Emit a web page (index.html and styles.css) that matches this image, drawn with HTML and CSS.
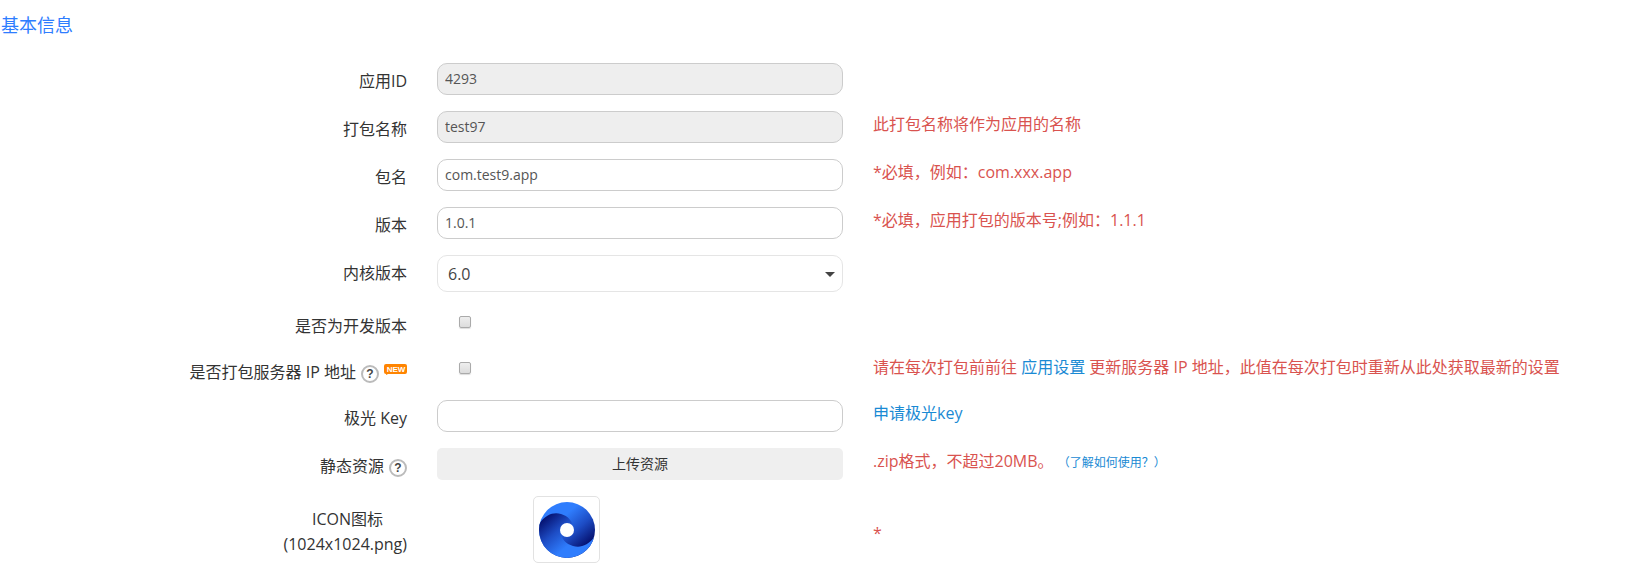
FILE: index.html
```html
<!DOCTYPE html>
<html lang="zh-CN">
<head>
<meta charset="utf-8">
<meta name="viewport" content="width=device-width, initial-scale=1">
<title>基本信息</title>
<link rel="stylesheet" href="styles.css">
</head>
<body>
<main>
  <h1 class="title">基本信息</h1>
  <form class="form">
    <div class="row">
      <label class="label" for="app-id">应用ID</label>
      <input class="input" id="app-id" type="text" value="4293" readonly>
    </div>
    <div class="row">
      <label class="label" for="pack-name">打包名称</label>
      <input class="input" id="pack-name" type="text" value="test97" readonly>
      <p class="hint">此打包名称将作为应用的名称</p>
    </div>
    <div class="row">
      <label class="label" for="package">包名</label>
      <input class="input" id="package" type="text" value="com.test9.app">
      <p class="hint">*必填，例如：com.xxx.app</p>
    </div>
    <div class="row">
      <label class="label" for="version">版本</label>
      <input class="input" id="version" type="text" value="1.0.1">
      <p class="hint">*必填，应用打包的版本号;例如：1.1.1</p>
    </div>
    <div class="row">
      <label class="label" for="core">内核版本</label>
      <div class="select-wrap">
        <select class="select" id="core"><option>6.0</option></select>
        <svg class="caret" viewBox="0 0 10 5" aria-hidden="true"><path d="M0 0h10L5 5z"/></svg>
      </div>
    </div>
    <div class="row">
      <label class="label" for="dev">是否为开发版本</label>
      <div class="check-cell"><input class="check" id="dev" type="checkbox"></div>
    </div>
    <div class="row">
      <div class="label">
        <label for="pack-ip">是否打包服务器 IP 地址</label>
        <span class="help">?</span>
        <svg class="new" viewBox="0 0 23 11" role="img" aria-label="NEW">
          <path d="M2 0h19q2 0 2 2v6q0 2-2 2H4L2 11V10Q0 10 0 8V2q0-2 2-2z"/>
          <text x="12" y="8" text-anchor="middle">NEW</text>
        </svg>
      </div>
      <div class="check-cell"><input class="check" id="pack-ip" type="checkbox"></div>
      <p class="hint">请在每次打包前前往 <a href="#settings">应用设置</a> 更新服务器 IP 地址，此值在每次打包时重新从此处获取最新的设置</p>
    </div>
    <div class="row">
      <label class="label" for="key">极光 Key</label>
      <input class="input" id="key" type="text">
      <p class="hint"><a href="#key-apply">申请极光key</a></p>
    </div>
    <div class="row">
      <div class="label">
        <label for="upload">静态资源</label>
        <span class="help">?</span>
      </div>
      <button class="upload" id="upload" type="button">上传资源</button>
      <p class="hint">.zip格式，不超过20MB。 <a class="small" href="#usage">（了解如何使用？）</a></p>
    </div>
    <div class="row row-icon">
      <label class="label label-icon" for="icon"><span class="label-line">ICON图标</span><span>(1024x1024.png)</span></label>
      <button class="icon-box" id="icon" type="button">
        <svg class="logo" viewBox="0 0 56 56" aria-hidden="true">
          <defs>
            <clipPath id="disc"><circle cx="28" cy="28" r="28"/></clipPath>
            <linearGradient id="left" gradientUnits="userSpaceOnUse" x1="1" y1="19" x2="25" y2="47">
              <stop offset="0" stop-color="#05106e"/><stop offset="0.5" stop-color="#1d4cc4"/><stop offset="1" stop-color="#2f7dfd"/>
            </linearGradient>
            <linearGradient id="right" gradientUnits="userSpaceOnUse" x1="55" y1="37" x2="31" y2="9">
              <stop offset="0" stop-color="#05106e"/><stop offset="0.5" stop-color="#1d4cc4"/><stop offset="1" stop-color="#2f7dfd"/>
            </linearGradient>
          </defs>
          <g clip-path="url(#disc)">
            <path fill="url(#right)" d="M0 0H56V56H0Z"/>
            <path fill="url(#left)" d="M0 22C7 12 15 10 22 12C29 14 34 19 35 28H21C22 37 27 42 34 44C41 46 49 44 56 34V56H0Z"/>
          </g>
          <circle cx="28" cy="28" r="7" fill="#fff"/>
        </svg>
      </button>
      <p class="hint">*</p>
    </div>
  </form>
</main>
</body>
</html>
```

FILE: styles.css
```css
* { box-sizing: border-box; }

body {
  margin: 0;
  background: #fff;
  color: #333;
  font: 16px/22px "Open Sans", "Noto Sans CJK SC", sans-serif;
}

.title {
  margin: 0;
  padding: 12px 1px 25px;
  color: #2e7dff;
  font-size: 18px;
  font-weight: 400;
  line-height: 26px;
}

.form {
  display: grid;
  gap: 16px;
  padding-bottom: 14px;
}

.row {
  display: grid;
  grid-template-columns: 407fr 406fr 776fr;
  column-gap: 30px;
  align-items: start;
  min-height: 30px;
}

.label {
  display: flex;
  justify-content: flex-end;
  height: 30px;
  padding-top: 7px;
  white-space: nowrap;
}

.input,
.select,
.upload,
.icon-box {
  font-family: inherit;
}

.input {
  width: 100%;
  height: 32px;
  padding: 0 7px 2px;
  border: 1px solid #ccc;
  border-radius: 10px;
  background: #fff;
  color: #555;
  font-size: 14px;
}

.input:read-only { background: #eee; }

.select-wrap { position: relative; }

.select {
  display: block;
  width: 100%;
  height: 37px;
  padding: 0 10px;
  appearance: none;
  border: 1px solid #e5e5e5;
  border-radius: 10px;
  background: #fff;
  color: #444;
  font-size: 16px;
}

.caret {
  position: absolute;
  top: 17px;
  right: 8px;
  width: 10px;
  height: 5px;
  fill: #444;
  pointer-events: none;
}

.check-cell {
  display: flex;
  padding: 8px 22px 0;
}

.check {
  width: 12px;
  height: 12px;
  margin: 0;
  appearance: none;
  border: 1px solid #aaa;
  border-radius: 2px;
  background: linear-gradient(#eee, #dcdcdc);
  box-shadow: 0 1px 1px #ddd;
}

.check:checked { background: #777; }

.help {
  width: 18px;
  height: 18px;
  margin: 4px 0 0 5px;
  border: 2px solid #bbb;
  border-radius: 50%;
  color: #444;
  font: bold 12px/14px "Liberation Sans", sans-serif;
  text-align: center;
}

.new {
  width: 23px;
  height: 11px;
  margin: 3px 0 0 5px;
  fill: #ff8400;
}

.new text {
  fill: #fff;
  font: bold 8px "Liberation Sans", sans-serif;
}

.hint {
  margin: 0;
  padding-top: 2px;
  color: #d9534f;
  white-space: nowrap;
}

a {
  color: #1a8ad4;
  text-decoration: none;
}

.small { font-size: 12px; }

.upload {
  height: 32px;
  padding: 0 6px 2px;
  border: 0;
  border-radius: 5px;
  background: #efefef;
  color: #333;
  font-size: 14px;
}

.row-icon .hint { padding-top: 26px; }

.label-icon {
  flex-direction: column;
  align-items: flex-end;
  justify-content: flex-start;
  height: auto;
  padding-top: 11px;
  line-height: 25px;
}

.label-line { padding-right: 24px; }

.icon-box {
  width: 67px;
  height: 67px;
  margin-left: 96px;
  padding: 4px;
  border: 1px solid #e2e2e2;
  border-radius: 5px;
  background: #fff;
}

.logo {
  display: block;
  width: 56px;
  height: 56px;
  margin: 0 auto;
}
```
